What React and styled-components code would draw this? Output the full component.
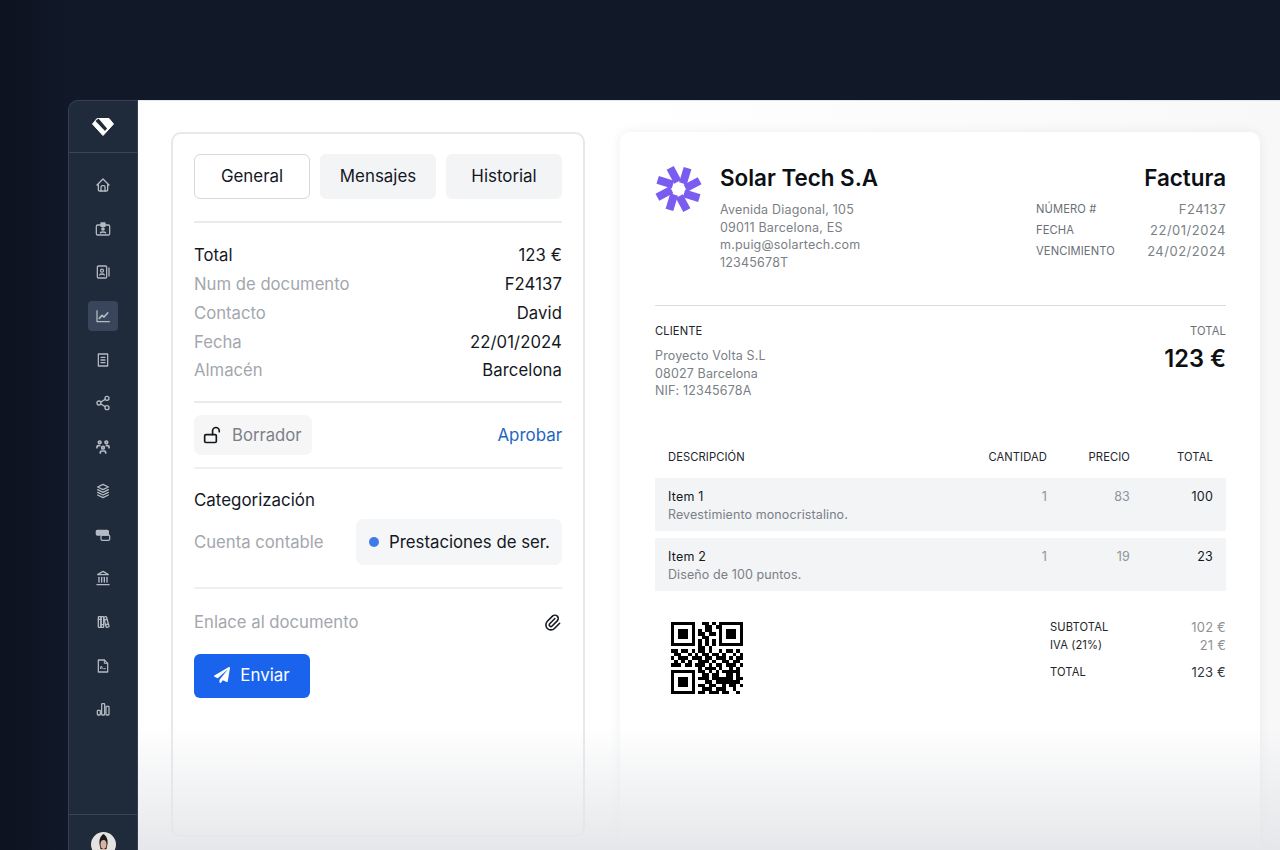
import React from 'react';
import styled, { createGlobalStyle } from 'styled-components';
import { TbHome, TbStack3, TbBooks, TbPaperclip, TbUsersGroup } from 'react-icons/tb';
import { LuLandmark, LuShare2 } from 'react-icons/lu';
import { FaPaperPlane } from 'react-icons/fa';

const GlobalStyle = createGlobalStyle`
  html, body { margin: 0; height: 100%; background: #0f1626; overflow: hidden; }
  * { box-sizing: border-box; }
  body { font-family: Inter, "Liberation Sans", sans-serif; color: #14181f; }
`;

// /////////////// LAYOUT //////////////////////// //

const Stage = styled.div`
  height: 850px;
  padding: 100px 0 0 68px;
  background: linear-gradient(90deg, #0c1220 0, #111827 68px);
  overflow: hidden;
`;

const Frame = styled.div`
  display: flex;
  height: 750px;
`;

const Sidebar = styled.aside`
  width: 70px;
  flex: none;
  display: flex;
  flex-direction: column;
  background: #1f2a3a;
  border: 1px solid #354051;
  border-width: 1px 1px 0 1px;
  border-top-left-radius: 10px;
`;

const LogoBox = styled.div`
  height: 52px;
  flex: none;
  display: flex;
  align-items: center;
  justify-content: center;
  border-bottom: 1px solid #3a4555;
`;

const Nav = styled.nav`
  flex: 1;
  display: flex;
  flex-direction: column;
  align-items: center;
  gap: 13.7px;
  padding-top: 17px;
`;

const NavItem = styled.div`
  width: 30px;
  height: 30px;
  display: flex;
  align-items: center;
  justify-content: center;
  border-radius: 4px;
  color: #b4bac3;
  background: ${(p) => (p.$active ? '#39455a' : 'transparent')};
  svg { width: 16px; height: 16px; }
`;

const SideFoot = styled.div`
  height: 36px;
  flex: none;
  display: flex;
  justify-content: center;
  padding-top: 17px;
  border-top: 1px solid #3a4555;
  overflow: hidden;
`;

const Main = styled.main`
  position: relative;
  flex: 1;
  display: flex;
  align-items: flex-start;
  gap: 35px;
  padding: 31px 20px 0 33px;
  background: linear-gradient(90deg, #ffffff 0, #ffffff 480px, #f8f8f9 100%);
  border-top: 1px solid #e4e6ea;
  overflow: hidden;
`;

const Fade = styled.div`
  position: absolute;
  left: 0;
  right: 0;
  bottom: 0;
  height: 125px;
  background: linear-gradient(180deg, rgba(228, 230, 233, 0) 0, rgba(228, 230, 233, 0.95) 100%);
  pointer-events: none;
`;

// /////////////// LEFT PANEL //////////////////////// //

const Panel = styled.section`
  width: 414px;
  height: 705px;
  flex: none;
  padding: 20px 21px 0;
  background: #fff;
  border: 2px solid #e6e8eb;
  border-radius: 10px;
  font-size: 16.7px;
`;

const Tabs = styled.div`
  display: flex;
  gap: 10px;
  padding-bottom: 22px;
  border-bottom: 2px solid #e9ebed;
`;

const Tab = styled.div`
  width: 116px;
  height: 45px;
  display: flex;
  align-items: center;
  justify-content: center;
  padding-bottom: 1px;
  border-radius: 6px;
  font-size: 16.9px;
  background: ${(p) => (p.$active ? '#fff' : '#f3f4f6')};
  border: 1px solid ${(p) => (p.$active ? '#d5d8dc' : '#f3f4f6')};
`;

const Details = styled.div`
  padding: 18px 0 16px;
  border-bottom: 2px solid #e9ebed;
`;

const DetailRow = styled.div`
  display: flex;
  justify-content: space-between;
  align-items: center;
  height: 28.75px;
`;

const Value = styled.span`
  letter-spacing: 0.1px;
`;

const Label = styled.span`
  color: ${(p) => (p.$dark ? '#14181f' : '#a3a7ad')};
`;

const StatusRow = styled.div`
  display: flex;
  justify-content: space-between;
  align-items: center;
  padding: 12px 0;
  border-bottom: 2px solid #eef0f2;
`;

const StatusPill = styled.div`
  width: 118px;
  height: 40px;
  display: flex;
  align-items: center;
  gap: 9px;
  padding-left: 9px;
  background: #f6f6f7;
  border-radius: 7px;
  color: #7d8188;
  svg { color: #14181f; width: 20px; height: 20px; }
`;

const Approve = styled.span`
  color: #1f66c1;
  font-size: 16.9px;
`;

const Category = styled.div`
  padding: 19px 0 22px;
  border-bottom: 2px solid #eef0f2;
`;

const CategoryTitle = styled.div`
  font-size: 16.9px;
  line-height: 24px;
  margin-bottom: 7px;
`;

const CategoryRow = styled.div`
  display: flex;
  justify-content: space-between;
  align-items: center;
`;

const AccountPill = styled.div`
  width: 206px;
  height: 46px;
  display: flex;
  align-items: center;
  gap: 10px;
  padding-left: 13px;
  background: #f5f6f7;
  border-radius: 7px;
  font-size: 16.8px;
  white-space: nowrap;
`;

const Dot = styled.span`
  width: 10px;
  height: 10px;
  border-radius: 50%;
  background: #3f7be8;
`;

const LinkRow = styled.div`
  display: flex;
  justify-content: space-between;
  align-items: center;
  padding: 22px 0 20px;
  height: 65px;
  svg { width: 19px; height: 19px; color: #14181f; }
`;

const SendButton = styled.button`
  width: 116px;
  height: 44px;
  display: flex;
  align-items: center;
  justify-content: center;
  gap: 10px;
  padding: 0 0 1px;
  border: 0;
  border-radius: 6px;
  background: #1a64ed;
  color: #fff;
  font: 400 16.9px Inter, "Liberation Sans", sans-serif;
  svg { width: 16px; height: 16px; }
`;

// /////////////// INVOICE //////////////////////// //

const Invoice = styled.section`
  width: 640px;
  height: 760px;
  flex: none;
  padding: 29px 34px 0 35px;
  background: #fff;
  border-radius: 10px;
  box-shadow: 0 0 12px rgba(30, 40, 60, 0.07);
  font-size: 12.5px;
  color: #7b7f86;
  letter-spacing: 0.2px;
`;

const InvoiceHead = styled.div`
  display: flex;
  justify-content: space-between;
  height: 145px;
  border-bottom: 1px solid #d9dbde;
`;

const Brand = styled.div`
  display: flex;
  gap: 18px;
  svg { margin-top: 4px; flex: none; }
`;

const Heading = styled.div`
  font-size: 22.4px;
  font-weight: 600;
  line-height: 34px;
  color: #0c0f14;
  letter-spacing: 0;
  margin-bottom: ${(p) => p.$gap || '6px'};
  text-align: ${(p) => p.$align || 'left'};
`;

const AddressLine = styled.div`
  line-height: 17.5px;
`;

const MetaBlock = styled.div`
  width: 190px;
`;

const MetaRow = styled.div`
  display: flex;
  justify-content: space-between;
  align-items: center;
  height: 21.25px;
  font-size: 13px;
  letter-spacing: 0.5px;
`;

const SmallLabel = styled.span`
  font-size: 11.2px;
  letter-spacing: 0.1px;
  color: ${(p) => (p.$dark ? '#22262c' : '#6b6f76')};
`;

const ClientRow = styled.div`
  display: flex;
  justify-content: space-between;
  padding-top: 17px;
  height: 142px;
`;

const ClientTotal = styled.div`
  text-align: right;
`;

const BigTotal = styled.div`
  font-size: 23.6px;
  font-weight: 600;
  color: #0c0f14;
  letter-spacing: 0;
  line-height: 30px;
  margin-top: 6px;
`;

const ClientAddress = styled.div`
  margin-top: 9px;
  letter-spacing: 0.15px;
`;

const TableRow = styled.div`
  display: grid;
  grid-template-columns: 1fr 90px 83px 83px;
  padding: 0 13px;
  align-items: start;
  text-align: right;
`;

const HeadRow = styled(TableRow)`
  height: 30px;
  padding-top: 2px;
  line-height: 14px;
`;

const ItemRow = styled(TableRow)`
  height: 53px;
  padding-top: 10px;
  margin-bottom: 7px;
  background: #f2f4f6;
`;

const LeftCell = styled.div`
  text-align: left;
`;

const ItemName = styled.div`
  color: #14181f;
  line-height: 18px;
`;

const ItemDesc = styled.div`
  line-height: 18px;
  letter-spacing: 0.1px;
`;

const Amount = styled.div`
  color: #14181f;
  line-height: 18px;
`;

const Muted = styled.div`
  line-height: 18px;
  color: #909398;
`;

const Summary = styled.div`
  display: flex;
  justify-content: space-between;
  padding: 24px 0 0 16px;
`;

const Totals = styled.div`
  width: 176px;
  margin-top: -4px;
`;

const TotalRow = styled.div`
  display: flex;
  justify-content: space-between;
  align-items: center;
  height: 18px;
  font-size: 13px;
  margin-top: ${(p) => (p.$spaced ? '9px' : '0')};
  color: ${(p) => (p.$dark ? '#33373d' : '#909398')};
`;

// /////////////// DRAWINGS //////////////////////// //

const LogoMark = () => (
  <svg width="22" height="18" viewBox="0 0 22 18">
    <path d="M5 .5h12L21.5 6 11 17.5.5 6z" fill="#fff" stroke="#fff" strokeLinejoin="round" />
    <path d="M6.5 .5 15 10.5 13 13 3.5 3z" fill="#1f2a3a" />
  </svg>
);

const SolarLogo = () => {
  const angles = [-28, 17, 62, 107, 152, 197, 242, 287];
  return (
    <svg width="47" height="48" viewBox="-25 -25 50 50">
      {angles.map((a) => (
        <rect key={a} x="-1.500" y="-24" width="8.500" height="17" fill="#7b5cf0" transform={`rotate(${a})`} />
      ))}
    </svg>
  );
};

const QR_ROWS = [
  '111111100110101111111',
  '100000100011011000001',
  '101110101011001011101',
  '101110101101101011101',
  '101110100110001011101',
  '100000101010101000001',
  '111111101010101111111',
  '000000001101000000000',
  '110110101101001011010',
  '011001010110110100101',
  '101110111011011101011',
  '010101001110100110110',
  '111011011101011011101',
  '000000001011101001010',
  '111111101101010111110',
  '100000100110110011010',
  '101110101110111111011',
  '101110100011011111110',
  '101110101101100101101',
  '100000100111011100100',
  '111111101101110110010',
];

const QrCode = () => (
  <svg width="72" height="72" viewBox="0 0 21 21" shapeRendering="crispEdges">
    {QR_ROWS.map((row, y) => row.split('').map((c, x) => (
      c === '1' ? <rect key={`${x}-${y}`} x={x} y={y} width="1" height="1" fill="#000" /> : null
    )))}
  </svg>
);

const Avatar = () => (
  <svg width="25" height="25" viewBox="0 0 25 25">
    <clipPath id="av"><circle cx="12.5" cy="12.5" r="12.5" /></clipPath>
    <g clipPath="url(#av)">
      <rect width="25" height="25" fill="#e4e3e1" />
      <path d="M8.5 12c-.5-5 1-8 4-10 3 2 4.500 5 4 10l-1 5h-6z" fill="#1d1a1c" />
      <ellipse cx="12.5" cy="12.500" rx="3" ry="4.400" fill="#d8b3a2" />
      <path d="M10 17h5l5 8H5z" fill="#d8b3a2" />
    </g>
  </svg>
);

const Glyph = ({ children, ...rest }) => (
  <svg viewBox="0 0 24 24" fill="none" stroke="currentColor" strokeWidth="1.9" strokeLinecap="round" strokeLinejoin="round" {...rest}>
    {children}
  </svg>
);

const IdIcon = () => (
  <Glyph>
    <rect x="2" y="6" width="20" height="15" rx="2" />
    <path d="M9 3h6v5H9z" fill="currentColor" />
    <circle cx="12" cy="12" r="1.800" fill="currentColor" />
    <path d="M8 18c.5-2 7.500-2 8 0" />
  </Glyph>
);

const ContactIcon = () => (
  <Glyph>
    <rect x="3.500" y="3" width="14" height="18" rx="1.500" />
    <circle cx="10.500" cy="10" r="2.200" />
    <path d="M7 16.500c.8-2 6.200-2 7 0M21 6v12" />
  </Glyph>
);

const TrendIcon = () => (
  <Glyph>
    <path d="M3 4v16.500h18.500" />
    <path d="M6.500 15.500 10.500 11l3 2.500 5.500-6" strokeWidth="2.600" />
  </Glyph>
);

const ReceiptIcon = () => (
  <Glyph>
    <path d="M5 3h14v18H5z" />
    <path d="M9 8h6M9 12h6M9 16h6" />
  </Glyph>
);

const CardsIcon = () => (
  <Glyph>
    <rect x="2" y="5" width="18" height="7" rx="1.500" fill="currentColor" />
    <rect x="9" y="12" width="13" height="8" rx="2" />
  </Glyph>
);

const FileIcon = () => (
  <Glyph>
    <path d="M5 3h9l5 5v13H5z" />
    <path d="M14 3v5h5M8.500 16v-3h2v3M13 16h2.500" strokeWidth="1.500" />
  </Glyph>
);

const BarsIcon = () => (
  <Glyph>
    <rect x="3.500" y="14" width="4.500" height="7" rx="1" />
    <rect x="10" y="4" width="4.500" height="17" rx="1" />
    <rect x="16.500" y="8" width="4.500" height="13" rx="1" />
  </Glyph>
);

const LockIcon = () => (
  <Glyph strokeWidth="2">
    <rect x="2" y="11.500" width="14" height="9.500" rx="1.500" />
    <path d="M11.500 11.500V7a4 4 0 0 1 8 0v1" />
  </Glyph>
);

const GroupIcon = () => <TbUsersGroup size={18} strokeWidth={2.6} />;

// /////////////// COMPONENT //////////////////////// //

const navIcons = [
  TbHome, IdIcon, ContactIcon, TrendIcon, ReceiptIcon, LuShare2, GroupIcon,
  TbStack3, CardsIcon, LuLandmark, TbBooks, FileIcon, BarsIcon,
];

const details = [
  ['Total', '123 €', true],
  ['Num de documento', 'F24137'],
  ['Contacto', 'David'],
  ['Fecha', '22/01/2024'],
  ['Almacén', 'Barcelona'],
];

const items = [
  ['Item 1', 'Revestimiento monocristalino.', '1', '83', '100'],
  ['Item 2', 'Diseño de 100 puntos.', '1', '19', '23'],
];

export default function App() {
  return (
    <Stage>
      <GlobalStyle />
      <Frame>
        <Sidebar>
          <LogoBox><LogoMark /></LogoBox>
          <Nav>
            {navIcons.map((Icon, i) => (
              <NavItem key={i} $active={i === 3}><Icon /></NavItem>
            ))}
          </Nav>
          <SideFoot><Avatar /></SideFoot>
        </Sidebar>
        <Main>
          <Panel>
            <Tabs>
              <Tab $active>General</Tab>
              <Tab>Mensajes</Tab>
              <Tab>Historial</Tab>
            </Tabs>
            <Details>
              {details.map(([k, v, dark]) => (
                <DetailRow key={k}>
                  <Label $dark={dark}>{k}</Label>
                  <Value>{v}</Value>
                </DetailRow>
              ))}
            </Details>
            <StatusRow>
              <StatusPill><LockIcon />Borrador</StatusPill>
              <Approve>Aprobar</Approve>
            </StatusRow>
            <Category>
              <CategoryTitle>Categorización</CategoryTitle>
              <CategoryRow>
                <Label>Cuenta contable</Label>
                <AccountPill><Dot />Prestaciones de ser.</AccountPill>
              </CategoryRow>
            </Category>
            <LinkRow>
              <Label>Enlace al documento</Label>
              <TbPaperclip />
            </LinkRow>
            <SendButton><FaPaperPlane />Enviar</SendButton>
          </Panel>
          <Invoice>
            <InvoiceHead>
              <Brand>
                <SolarLogo />
                <div>
                  <Heading>Solar Tech S.A</Heading>
                  <AddressLine>Avenida Diagonal, 105</AddressLine>
                  <AddressLine>09011 Barcelona, ES</AddressLine>
                  <AddressLine>m.puig@solartech.com</AddressLine>
                  <AddressLine>12345678T</AddressLine>
                </div>
              </Brand>
              <MetaBlock>
                <Heading $align="right" $gap="3px">Factura</Heading>
                <MetaRow><SmallLabel>NÚMERO #</SmallLabel><span>F24137</span></MetaRow>
                <MetaRow><SmallLabel>FECHA</SmallLabel><span>22/01/2024</span></MetaRow>
                <MetaRow><SmallLabel>VENCIMIENTO</SmallLabel><span>24/02/2024</span></MetaRow>
              </MetaBlock>
            </InvoiceHead>
            <ClientRow>
              <div>
                <SmallLabel $dark>CLIENTE</SmallLabel>
                <ClientAddress>
                  <AddressLine>Proyecto Volta S.L</AddressLine>
                  <AddressLine>08027 Barcelona</AddressLine>
                  <AddressLine>NIF: 12345678A</AddressLine>
                </ClientAddress>
              </div>
              <ClientTotal>
                <SmallLabel>TOTAL</SmallLabel>
                <BigTotal>123 €</BigTotal>
              </ClientTotal>
            </ClientRow>
            <HeadRow>
              <LeftCell><SmallLabel $dark>DESCRIPCIÓN</SmallLabel></LeftCell>
              <SmallLabel $dark>CANTIDAD</SmallLabel>
              <SmallLabel $dark>PRECIO</SmallLabel>
              <SmallLabel $dark>TOTAL</SmallLabel>
            </HeadRow>
            {items.map(([name, desc, qty, price, total]) => (
              <ItemRow key={name}>
                <LeftCell>
                  <ItemName>{name}</ItemName>
                  <ItemDesc>{desc}</ItemDesc>
                </LeftCell>
                <Muted>{qty}</Muted>
                <Muted>{price}</Muted>
                <Amount>{total}</Amount>
              </ItemRow>
            ))}
            <Summary>
              <QrCode />
              <Totals>
                <TotalRow><SmallLabel $dark>SUBTOTAL</SmallLabel><span>102 €</span></TotalRow>
                <TotalRow><SmallLabel $dark>IVA (21%)</SmallLabel><span>21 €</span></TotalRow>
                <TotalRow $spaced $dark><SmallLabel $dark>TOTAL</SmallLabel><span>123 €</span></TotalRow>
              </Totals>
            </Summary>
          </Invoice>
          <Fade />
        </Main>
      </Frame>
    </Stage>
  );
}
